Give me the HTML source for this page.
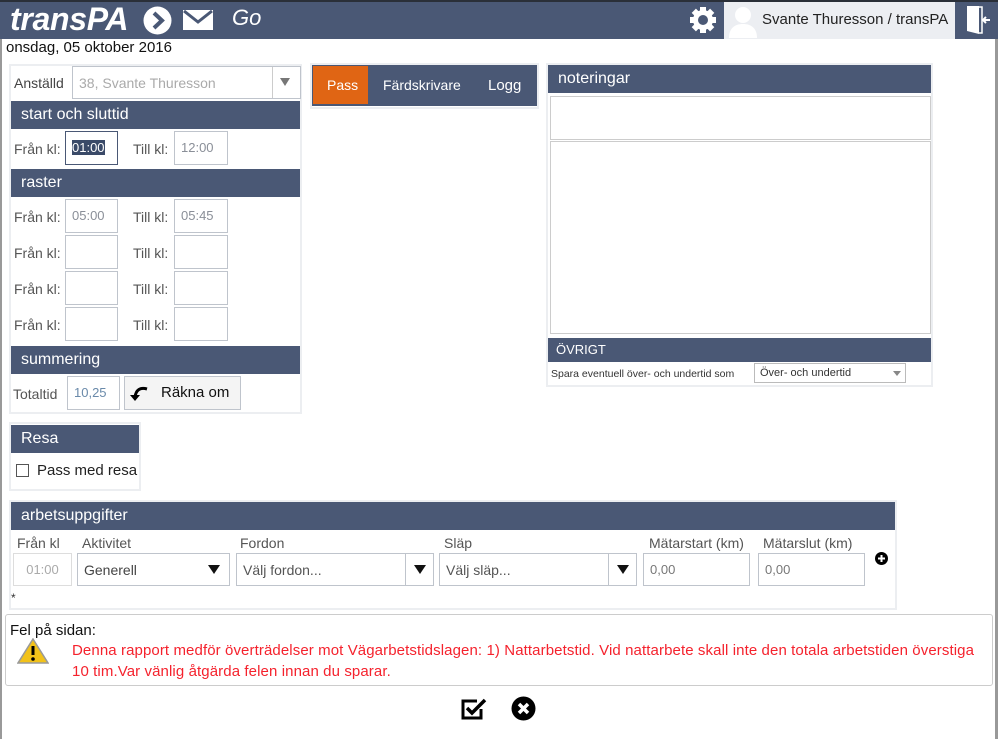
<!DOCTYPE html>
<html><head><meta charset="utf-8"><style>
*{box-sizing:border-box}
body{margin:0;width:998px;height:739px;background:#fff;font-family:"Liberation Sans",sans-serif;font-size:14px;color:#222;position:relative;overflow:hidden}
.a{position:absolute}
.hd{position:absolute;background:#4a5875;color:#fff;font-size:16px;padding-left:10px;line-height:28px}
.pn{position:absolute;border:2px solid #eceef1;background:#fff}
.in{position:absolute;border:1px solid #bfc4cc;background:#fff;color:#8a8f98;font-size:13px;padding-left:6px;line-height:32px}
.lb{position:absolute;color:#555;font-size:14px}
.tri{position:absolute;width:0;height:0;border-left:6px solid transparent;border-right:6px solid transparent;border-top:9px solid #111}
</style></head><body>
<div class="a" style="left:0;top:0;width:2px;height:739px;background:#999"></div>
<div class="a" style="left:995px;top:0;width:3px;height:739px;background:#999"></div>
<div class="a" style="left:0;top:0;width:998px;height:39px;background:#4a5875;border-top:2px solid #2a2f38"></div>
<div class="a" style="left:10px;top:1px;color:#fff;font-size:32px;font-weight:bold;font-style:italic;letter-spacing:-0.3px">transPA</div>
<svg class="a" style="left:143px;top:6px" width="29" height="29" viewBox="0 0 29 29"><circle cx="14.5" cy="14.5" r="14" fill="#fff"/><path d="M11 7l8 7.5-8 7.5" stroke="#4a5875" stroke-width="4" fill="none"/></svg>
<svg class="a" style="left:183px;top:10px" width="30" height="20" viewBox="0 0 30 20"><rect width="30" height="20" fill="#fff"/><path d="M1 1l14 11 14-11" stroke="#4a5875" stroke-width="3" fill="none"/></svg>
<div class="a" style="left:232px;top:5px;color:#fff;font-size:22px;font-style:italic">Go</div>
<svg class="a" style="left:688px;top:5px" width="30" height="30" viewBox="0 0 30 30"><g fill="#fff"><circle cx="15" cy="15" r="10"/><g stroke="#fff" stroke-width="6"><path d="M15 2v26M2 15h26M5.8 5.8l18.4 18.4M24.2 5.8L5.8 24.2"/></g></g><circle cx="15" cy="15" r="5" fill="#4a5875"/></svg>
<div class="a" style="left:724px;top:2px;width:231px;height:37px;background:#eceef2"></div>
<svg class="a" style="left:728px;top:4px" width="30" height="34" viewBox="0 0 30 34"><circle cx="15" cy="11" r="8" fill="#fff"/><path d="M1 34c0-10 6-14 14-14s14 4 14 14z" fill="#fff"/></svg>
<div class="a" style="left:762px;top:11px;font-size:15px;color:#222">Svante Thuresson / transPA</div>
<svg class="a" style="left:965px;top:5px" width="26" height="30" viewBox="0 0 26 30"><path d="M2 1h12v28L2 26z" fill="#fff"/><path d="M14 2h3v26h-3" stroke="#fff" stroke-width="1.5" fill="none"/><path d="M25 15h-6M21 12l-3 3 3 3" stroke="#fff" stroke-width="2" fill="none"/></svg>
<div class="a" style="left:6px;top:39px;font-size:15px;color:#111">onsdag, 05 oktober 2016</div>

<div class="pn" style="left:9px;top:64px;width:293px;height:350px"></div>
<div class="lb" style="left:14px;top:75px;color:#444">Anställd</div>
<div class="in" style="left:72px;top:66px;width:229px;height:33px;color:#aaa;font-size:14px">38, Svante Thuresson</div>
<div class="a" style="left:272px;top:67px;width:1px;height:31px;background:#ccc"></div>
<div class="tri" style="left:280px;top:78px;border-top-color:#777;border-left-width:5px;border-right-width:5px;border-top-width:8px"></div>
<div class="hd" style="left:11px;top:101px;width:289px;height:28px">start och sluttid</div>
<div class="lb" style="left:14px;top:141px">Från kl:</div>
<div class="in" style="left:65px;top:131px;width:53px;height:34px;border-color:#4a5875;color:#fff"><span style="background:#3a4a68;line-height:18px">01:00</span></div>
<div class="lb" style="left:133px;top:141px">Till kl:</div>
<div class="in" style="left:174px;top:131px;width:54px;height:34px">12:00</div>
<div class="hd" style="left:11px;top:169px;width:289px;height:28px">raster</div>
<div class="lb" style="left:14px;top:209px">Från kl:</div><div class="in" style="left:65px;top:199px;width:53px;height:34px">05:00</div>
<div class="lb" style="left:133px;top:209px">Till kl:</div><div class="in" style="left:174px;top:199px;width:54px;height:34px">05:45</div>
<div class="lb" style="left:14px;top:245px">Från kl:</div><div class="in" style="left:65px;top:235px;width:53px;height:34px"></div>
<div class="lb" style="left:133px;top:245px">Till kl:</div><div class="in" style="left:174px;top:235px;width:54px;height:34px"></div>
<div class="lb" style="left:14px;top:281px">Från kl:</div><div class="in" style="left:65px;top:271px;width:53px;height:34px"></div>
<div class="lb" style="left:133px;top:281px">Till kl:</div><div class="in" style="left:174px;top:271px;width:54px;height:34px"></div>
<div class="lb" style="left:14px;top:317px">Från kl:</div><div class="in" style="left:65px;top:307px;width:53px;height:34px"></div>
<div class="lb" style="left:133px;top:317px">Till kl:</div><div class="in" style="left:174px;top:307px;width:54px;height:34px"></div>
<div class="hd" style="left:11px;top:346px;width:289px;height:28px">summering</div>
<div class="lb" style="left:13px;top:386px">Totaltid</div>
<div class="in" style="left:67px;top:376px;width:53px;height:34px;color:#6a8aaa">10,25</div>
<div class="a" style="left:124px;top:376px;width:117px;height:34px;border:1px solid #bfc4cc;background:#f4f4f4;font-size:15px;line-height:32px;padding-left:36px;color:#111">Räkna om</div>
<svg class="a" style="left:130px;top:386px" width="18" height="16" viewBox="0 0 18 16"><path d="M17 3C10 1 6 4 5 11" stroke="#000" stroke-width="3" fill="none"/><path d="M0 9l5 6 5-6z" fill="#000"/></svg>

<div class="pn" style="left:9px;top:422px;width:132px;height:69px"></div>
<div class="hd" style="left:11px;top:425px;width:128px;height:28px">Resa</div>
<div class="a" style="left:16px;top:464px;width:13px;height:13px;border:1.5px solid #555"></div>
<div class="a" style="left:37px;top:462px;font-size:15px;color:#222">Pass med resa</div>

<div class="pn" style="left:310px;top:63px;width:229px;height:46px"></div>
<div class="a" style="left:312px;top:65px;width:225px;height:41px;background:#4a5875"></div>
<div class="a" style="left:313px;top:66px;width:55px;height:38px;background:#e06514"></div>
<div class="a" style="left:327px;top:77px;color:#fff;font-size:14px">Pass</div>
<div class="a" style="left:383px;top:77px;color:#fff;font-size:14px">Färdskrivare</div>
<div class="a" style="left:488px;top:77px;color:#fff;font-size:15px">Logg</div>

<div class="pn" style="left:546px;top:63px;width:387px;height:324px"></div>
<div class="hd" style="left:548px;top:65px;width:383px;height:28px">noteringar</div>
<div class="a" style="left:550px;top:96px;width:381px;height:44px;border:1px solid #ccc"></div>
<div class="a" style="left:550px;top:141px;width:381px;height:193px;border:1px solid #ccc"></div>
<div class="hd" style="left:548px;top:338px;width:383px;height:24px;font-size:13px;line-height:24px;padding-left:8px">ÖVRIGT</div>
<div class="a" style="left:551px;top:368px;font-size:10.5px;color:#333">Spara eventuell över- och undertid som</div>
<div class="a" style="left:754px;top:363px;width:152px;height:20px;border:1px solid #bbb;font-size:11px;line-height:18px;padding-left:5px;color:#333">Över- och undertid</div>
<div class="tri" style="left:893px;top:371px;border-top-color:#888;border-left-width:4px;border-right-width:4px;border-top-width:5px"></div>

<div class="pn" style="left:9px;top:500px;width:888px;height:110px"></div>
<div class="hd" style="left:11px;top:502px;width:884px;height:28px">arbetsuppgifter</div>
<div class="lb" style="left:17px;top:535px">Från kl</div>
<div class="lb" style="left:82px;top:535px">Aktivitet</div>
<div class="lb" style="left:240px;top:535px">Fordon</div>
<div class="lb" style="left:444px;top:535px">Släp</div>
<div class="lb" style="left:649px;top:535px">Mätarstart (km)</div>
<div class="lb" style="left:763px;top:535px">Mätarslut (km)</div>
<div class="in" style="left:13px;top:553px;width:59px;height:33px;text-align:center;padding:0;color:#aaa;border-color:#ddd">01:00</div>
<div class="in" style="left:77px;top:553px;width:153px;height:33px;color:#444;font-size:14px">Generell</div>
<div class="tri" style="left:208px;top:565px"></div>
<div class="in" style="left:236px;top:553px;width:198px;height:33px;color:#555;font-size:14px">Välj fordon...</div>
<div class="a" style="left:405px;top:554px;width:1px;height:31px;background:#bfc4cc"></div>
<div class="tri" style="left:414px;top:565px"></div>
<div class="in" style="left:439px;top:553px;width:198px;height:33px;color:#555;font-size:14px">Välj släp...</div>
<div class="a" style="left:608px;top:554px;width:1px;height:31px;background:#bfc4cc"></div>
<div class="tri" style="left:617px;top:565px"></div>
<div class="in" style="left:643px;top:553px;width:107px;height:33px;color:#777">0,00</div>
<div class="in" style="left:758px;top:553px;width:107px;height:33px;color:#777">0,00</div>
<svg class="a" style="left:875px;top:552px" width="13" height="13" viewBox="0 0 13 13"><circle cx="6.5" cy="6.5" r="6.5" fill="#000"/><path d="M6.5 3v7M3 6.5h7" stroke="#fff" stroke-width="2"/></svg>
<div class="a" style="left:11px;top:591px;font-size:12px;color:#333">*</div>

<div class="a" style="left:5px;top:614px;width:988px;height:72px;border:1px solid #ccc;border-radius:3px"></div>
<div class="a" style="left:10px;top:622px;font-size:15px;color:#111">Fel på sidan:</div>
<svg class="a" style="left:17px;top:638px" width="32" height="26" viewBox="0 0 32 26"><path d="M16 1L31 25H1z" fill="#f2c21a" stroke="#999" stroke-width="1.5"/><path d="M16 8v9" stroke="#000" stroke-width="3"/><circle cx="16" cy="21" r="1.8"/></svg>
<div class="a" style="left:72px;top:640px;width:912px;font-size:15px;line-height:21px;color:#f5222d;letter-spacing:0.1px">Denna rapport medför överträdelser mot Vägarbetstidslagen: 1) Nattarbetstid. Vid nattarbete skall inte den totala arbetstiden överstiga<br>10 tim.Var vänlig åtgärda felen innan du sparar.</div>

<svg class="a" style="left:461px;top:698px" width="26" height="22" viewBox="0 0 26 22"><path d="M20 11v9H2V3h14" stroke="#000" stroke-width="3" fill="none"/><path d="M6 10l5 5L24 2" stroke="#000" stroke-width="3.5" fill="none"/></svg>
<svg class="a" style="left:511px;top:696px" width="25" height="25" viewBox="0 0 25 25"><circle cx="12.5" cy="12.5" r="12" fill="#000"/><path d="M8 8l9 9M17 8l-9 9" stroke="#fff" stroke-width="3.5"/></svg>
</body></html>
